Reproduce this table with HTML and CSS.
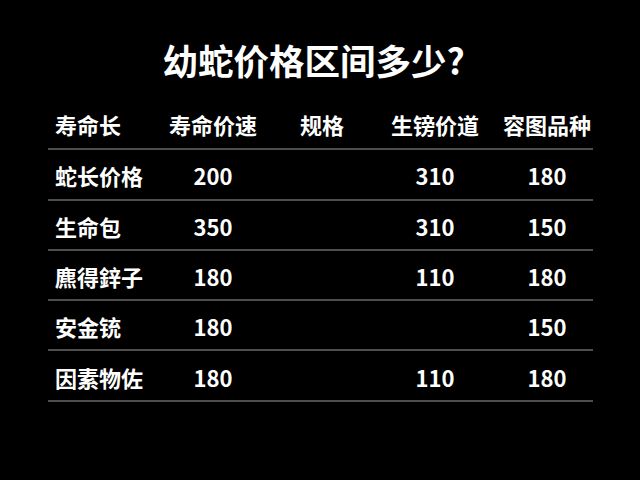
FILE: index.html
```html
<!DOCTYPE html>
<html lang="zh">
<head>
<meta charset="utf-8">
<link rel="stylesheet" href="styles.css">
</head>
<body>
<div class="page">
  <h1 class="title">幼蛇价格区间多少?</h1>
  <div class="table">
    <div class="row head">
      <div class="c first">寿命长</div>
      <div class="c">寿命价速</div>
      <div class="c">规格</div>
      <div class="c">生镑价道</div>
      <div class="c">容图品种</div>
    </div>
    <div class="row">
      <div class="c first">蛇长价格</div>
      <div class="c">200</div>
      <div class="c"></div>
      <div class="c">310</div>
      <div class="c">180</div>
    </div>
    <div class="row">
      <div class="c first">生命包</div>
      <div class="c">350</div>
      <div class="c"></div>
      <div class="c">310</div>
      <div class="c">150</div>
    </div>
    <div class="row">
      <div class="c first">麃得鋅子</div>
      <div class="c">180</div>
      <div class="c"></div>
      <div class="c">110</div>
      <div class="c">180</div>
    </div>
    <div class="row">
      <div class="c first">安金铳</div>
      <div class="c">180</div>
      <div class="c"></div>
      <div class="c"></div>
      <div class="c">150</div>
    </div>
    <div class="row">
      <div class="c first">因素物佐</div>
      <div class="c">180</div>
      <div class="c"></div>
      <div class="c">110</div>
      <div class="c">180</div>
    </div>
  </div>
</div>
</body>
</html>
```

FILE: styles.css
```css
html, body {
  margin: 0;
  padding: 0;
  background: #000;
}
body {
  width: 640px;
  height: 480px;
  overflow: hidden;
  color: #fff;
  font-family: "Noto Sans CJK SC", "Noto Sans", sans-serif;
  font-weight: 700;
}
.page {
  display: flex;
  flex-direction: column;
  align-items: center;
}
.title {
  margin: 36px 0 16px 0;
  padding-right: 13px;
  font-size: 35.5px;
  line-height: 48px;
  font-weight: 700;
  text-align: center;
}
.table {
  align-self: flex-start;
  margin-left: 48px;
  width: 545px;
}
.row {
  display: grid;
  grid-template-columns: 103px 124px 94px 132px 92px;
  height: 48.3px;
  align-items: center;
  border-bottom: 2px solid #4e4e4e;
  font-size: 22px;
}
.c {
  text-align: center;
  white-space: nowrap;
  padding-top: 2px;
}
.head .c {
  padding-top: 0;
}
.c.first {
  text-align: left;
  padding-left: 7px;
}
```
